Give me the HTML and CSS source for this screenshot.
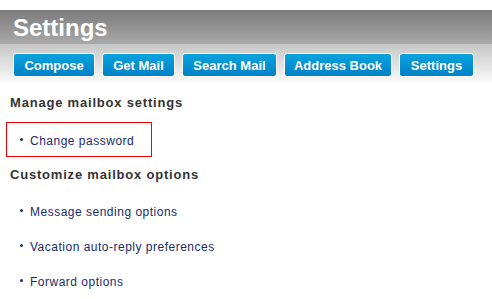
FILE: index.html
```html
<!DOCTYPE html>
<html lang="en">
<head>
  <meta charset="UTF-8">
  <title>Settings</title>
  <link rel="stylesheet" href="styles.css">
</head>
<body>
  <div class="header">
    <h1 class="title">Settings</h1>
    <div class="nav">
      <a class="btn btn-compose" href="#">Compose</a>
      <a class="btn btn-get" href="#">Get Mail</a>
      <a class="btn btn-search" href="#">Search Mail</a>
      <a class="btn btn-book" href="#">Address Book</a>
      <a class="btn btn-settings" href="#">Settings</a>
    </div>
  </div>

  <div class="content">
    <h3>Manage mailbox settings</h3>
    <ul class="links">
      <li class="focused"><a href="#">Change password</a></li>
    </ul>

    <h3 class="second">Customize mailbox options</h3>
    <ul class="links">
      <li><a href="#">Message sending options</a></li>
      <li><a href="#">Vacation auto-reply preferences</a></li>
      <li><a href="#">Forward options</a></li>
    </ul>
  </div>
</body>
</html>
```

FILE: styles.css
```css
body {
  font-family: "Liberation Sans", Arial, sans-serif;
  background: #fff;
  margin: 0;
  padding: 0;
}

.header {
  padding-top: 10px;
}

.title {
  margin: 0;
  height: 34px;
  padding-left: 13px;
  font-size: 24px;
  line-height: 36px;
  color: #fff;
  background: linear-gradient(#7b7b7b, #a9a9a9);
}

.nav {
  display: flex;
  gap: 7px;
  height: 38px;
  padding: 9px 0 0 13px;
  box-sizing: border-box;
  background: linear-gradient(#c6c6c6, #f9f9f9);
}

.btn {
  display: flex;
  align-items: center;
  justify-content: center;
  height: 24px;
  box-sizing: border-box;
  border: 1px solid #fff;
  border-radius: 3px;
  background: linear-gradient(#0aa3de, #0080c6);
  color: #fff;
  font-size: 13px;
  font-weight: bold;
  white-space: nowrap;
  text-decoration: none;
}

.btn-compose { width: 82px; }
.btn-get { width: 73px; }
.btn-search { width: 95px; }
.btn-book { width: 108px; }
.btn-settings { width: 75px; }

.content {
  padding: 0 10px;
}

h3 {
  margin: 0;
  padding: 13px 0 0;
  font-size: 13px;
  letter-spacing: 0.8px;
  color: #333;
  line-height: 16px;
}

h3.second {
  padding-top: 10px;
}

.links {
  list-style: none;
  margin: 10px 0 0;
  padding: 0;
}

.links li {
  height: 35px;
  line-height: 35px;
  padding-left: 20px;
  position: relative;
}

.links li::before {
  content: "";
  position: absolute;
  left: 10px;
  top: 16px;
  width: 3px;
  height: 3px;
  border-radius: 50%;
  background: #1a2a6c;
}

.links a {
  color: #1a2a6c;
  font-size: 12px;
  letter-spacing: 0.5px;
  text-decoration: none;
}

.links li.focused {
  height: 33px;
  line-height: 33px;
  margin-top: 11px;
  border: 1px solid #e00;
  margin-left: -4px;
  padding-left: 23px;
  width: 121px;
}

.links li.focused::before {
  left: 13px;
  top: 15px;
}
```
